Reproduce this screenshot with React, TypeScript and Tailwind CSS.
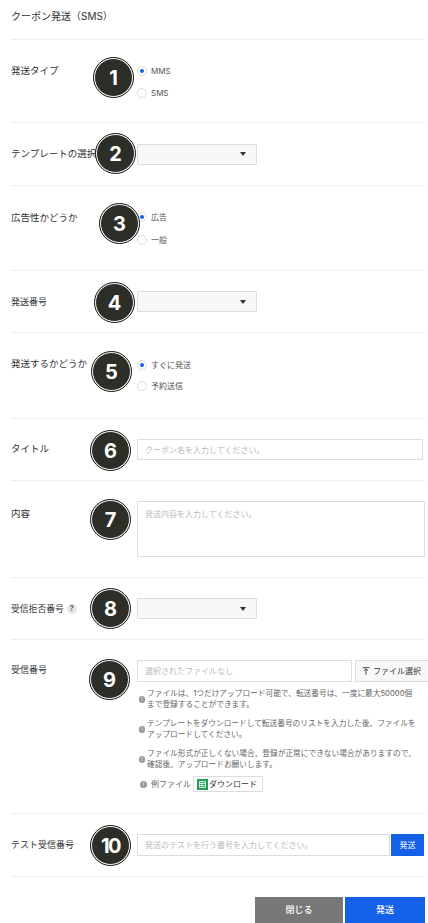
import React from 'react';

function Badge({ n, className }: { n: number; className: string }) {
  return (
    <div className={`absolute z-10 w-[39px] h-[39px] rounded-full bg-[#2d2e28] border-[1.5px] border-white outline outline-[1px] outline-[#111] flex items-center justify-center text-white font-bold text-[20px] font-['Inter',sans-serif] ${className}`}>
      {n}
    </div>
  );
}

function Radio({ label, checked }: { label: string; checked?: boolean }) {
  return (
    <div className="flex items-center h-[11px] text-[8px] text-[#555]">
      <span className="w-[10px] h-[10px] rounded-full border border-[#ddd] bg-white flex items-center justify-center mr-[4px]">
        {checked && <span className="w-[4px] h-[4px] rounded-full bg-[#1460e6]" />}
      </span>
      {label}
    </div>
  );
}

function Select() {
  return (
    <div className="w-[120px] h-[21px] border border-[#ddd] bg-[#f8f8f8] rounded-[1px] flex items-center justify-end pr-[10px]">
      <svg width="6" height="4" viewBox="0 0 6 4"><path d="M0 0h6L3 4z" fill="#333" /></svg>
    </div>
  );
}

function Note({ children }: { children: React.ReactNode }) {
  return (
    <div className="flex items-center w-[291px] text-[7.7px] leading-[11px] text-[#666]">
      <span className="w-[6px] h-[7px] rounded-full bg-[#999] text-white text-[5px] leading-[7px] text-center shrink-0 mr-[2px] ml-[2px]">!</span>
      <div>{children}</div>
    </div>
  );
}

export default function App() {
  return (
    <div className="w-[428px] h-[923px] overflow-hidden bg-white font-['Inter','Noto_Sans_CJK_JP',sans-serif] text-[#333]">
      <div className="ml-[11px] w-[414px]">
        <div className="h-[40px] border-b border-[#eee] text-[10px] pt-[9px]">クーポン発送（SMS）</div>

        {/* 発送タイプ */}
        <div className="relative h-[83px] border-b border-[#eee] flex">
          <div className="w-[126px] shrink-0 text-[9.5px] pt-[24px]">発送タイプ</div>
          <div className="flex flex-col gap-[11px] pt-[25px]">
            <Radio label="MMS" checked />
            <Radio label="SMS" />
          </div>
          <Badge n={1} className="left-[83px] top-[18px]" />
        </div>

        {/* テンプレート */}
        <div className="relative h-[63px] border-b border-[#eee] flex items-center">
          <div className="w-[126px] shrink-0 text-[9.5px] whitespace-nowrap">テンプレートの選択</div>
          <Select />
          <Badge n={2} className="left-[85px] top-[11px]" />
        </div>

        {/* 広告 */}
        <div className="relative h-[85px] border-b border-[#eee] flex">
          <div className="w-[126px] shrink-0 text-[9.5px] pt-[25px]">広告性かどうか</div>
          <div className="flex flex-col gap-[12px] pt-[25px]">
            <Radio label="広告" checked />
            <Radio label="一般" />
          </div>
          <Badge n={3} className="left-[89px] top-[18px]" />
        </div>

        {/* 発送番号 */}
        <div className="relative h-[62px] border-b border-[#eee] flex items-center">
          <div className="w-[126px] shrink-0 text-[9px]">発送番号</div>
          <Select />
          <Badge n={4} className="left-[84px] top-[12px]" />
        </div>

        {/* 発送するかどうか */}
        <div className="relative h-[86px] border-b border-[#eee] flex">
          <div className="w-[126px] shrink-0 text-[9.5px] pt-[24px]">発送するかどうか</div>
          <div className="flex flex-col gap-[10px] pt-[26px]">
            <Radio label="すぐに発送" checked />
            <Radio label="予約送信" />
          </div>
          <Badge n={5} className="left-[81px] top-[19px]" />
        </div>

        {/* タイトル */}
        <div className="relative h-[62px] border-b border-[#eee] flex items-center">
          <div className="w-[126px] shrink-0 text-[9.5px]">タイトル</div>
          <div className="w-[286px] h-[21px] border border-[#ddd] flex items-center pl-[7px] text-[8px] text-[#bbb]">クーポン名を入力してください。</div>
          <Badge n={6} className="left-[80px] top-[12px]" />
        </div>

        {/* 内容 */}
        <div className="relative h-[97px] border-b border-[#eee] flex">
          <div className="w-[126px] shrink-0 text-[9.5px] pt-[26px]">内容</div>
          <div className="mt-[20px] w-[288px] h-[56px] border border-[#ddd] pl-[7px] pt-[6px] text-[8px] text-[#bbb]">発送内容を入力してください。</div>
          <Badge n={7} className="left-[80px] top-[19px]" />
        </div>

        {/* 受信拒否番号 */}
        <div className="relative h-[62px] border-b border-[#eee] flex items-center">
          <div className="w-[126px] shrink-0 text-[8.8px] flex items-center">
            受信拒否番号
            <span className="ml-[3px] w-[10px] h-[10px] rounded-full bg-[#e6e6e6] text-[7px] font-bold text-center leading-[10px] text-[#555]">?</span>
          </div>
          <Select />
          <Badge n={8} className="left-[80px] top-[11px]" />
        </div>

        {/* 受信番号 */}
        <div className="relative h-[174px] border-b border-[#eee] flex">
          <div className="w-[126px] shrink-0 text-[9px] pt-[23px]">受信番号</div>
          <div className="pt-[20px] w-[291px] shrink-0">
            <div className="flex gap-[3px]">
              <div className="w-[215px] h-[22px] shrink-0 border border-[#ddd] flex items-center pl-[7px] text-[8px] text-[#bbb]">選択されたファイルなし</div>
              <div className="w-[76px] h-[22px] shrink-0 border border-[#ddd] bg-[#f8f8f8] flex items-center pl-[6px] text-[8px] whitespace-nowrap">
                <svg width="8" height="8" viewBox="0 0 8 8" className="mr-[3px]"><path d="M0.5 0.7h7M4 7.5V2M2 3.7 4 1.8l2 1.9" fill="none" stroke="#333" strokeWidth="0.9" /></svg>
                ファイル選択
              </div>
            </div>
            <div className="mt-[6px] flex flex-col gap-[8px]">
              <Note>ファイルは、1つだけアップロード可能で、転送番号は、一度に最大50000個<br />まで登録することができます。</Note>
              <Note>テンプレートをダウンロードして転送番号のリストを入力した後、ファイルを<br />アップロードしてください。</Note>
              <Note>ファイル形式が正しくない場合、登録が正常にできない場合がありますので、<br />確認後、アップロードお願いします。</Note>
            </div>
            <div className="mt-[6px] flex items-center text-[8px] text-[#666]">
              <span className="w-[7px] h-[7px] rounded-full bg-[#999] text-white text-[5px] leading-[7px] text-center ml-[3px] mr-[4px]">!</span>
              例ファイル
              <div className="ml-[2px] w-[70px] h-[16px] border border-[#ddd] flex items-center pl-[3px] text-[#333]">
                <svg width="11" height="11" viewBox="0 0 11 11" className="mr-[1px]"><rect width="11" height="11" fill="#1f9d55" /><path d="M2.5 2.5h6v6h-6zM2.5 4.5h6M2.5 6.5h6M5 2.5v6" fill="none" stroke="#fff" strokeWidth="0.8" /></svg>
                ダウンロード
              </div>
            </div>
          </div>
          <Badge n={9} className="left-[79px] top-[20px]" />
        </div>

        {/* テスト受信番号 */}
        <div className="relative h-[63px] border-b border-[#eee] flex items-center">
          <div className="w-[126px] shrink-0 text-[9px]">テスト受信番号</div>
          <div className="w-[253px] h-[22px] border border-[#ddd] flex items-center pl-[7px] text-[8px] text-[#bbb]">発送のテストを行う番号を入力してください。</div>
          <div className="ml-[1px] w-[33px] h-[22px] bg-[#1460e6] text-white text-[8px] flex items-center justify-center">発送</div>
          <Badge n={10} className="left-[80px] top-[12px] tracking-[-1.5px] text-[19px]" />
        </div>

        {/* footer */}
        <div className="flex justify-end gap-[2px] pt-[20px]">
          <div className="w-[88px] h-[26px] bg-[#777] text-white text-[9px] font-medium flex items-center justify-center">閉じる</div>
          <div className="w-[80px] h-[26px] bg-[#1460e6] text-white text-[9px] font-medium flex items-center justify-center">発送</div>
        </div>
      </div>
    </div>
  );
}
